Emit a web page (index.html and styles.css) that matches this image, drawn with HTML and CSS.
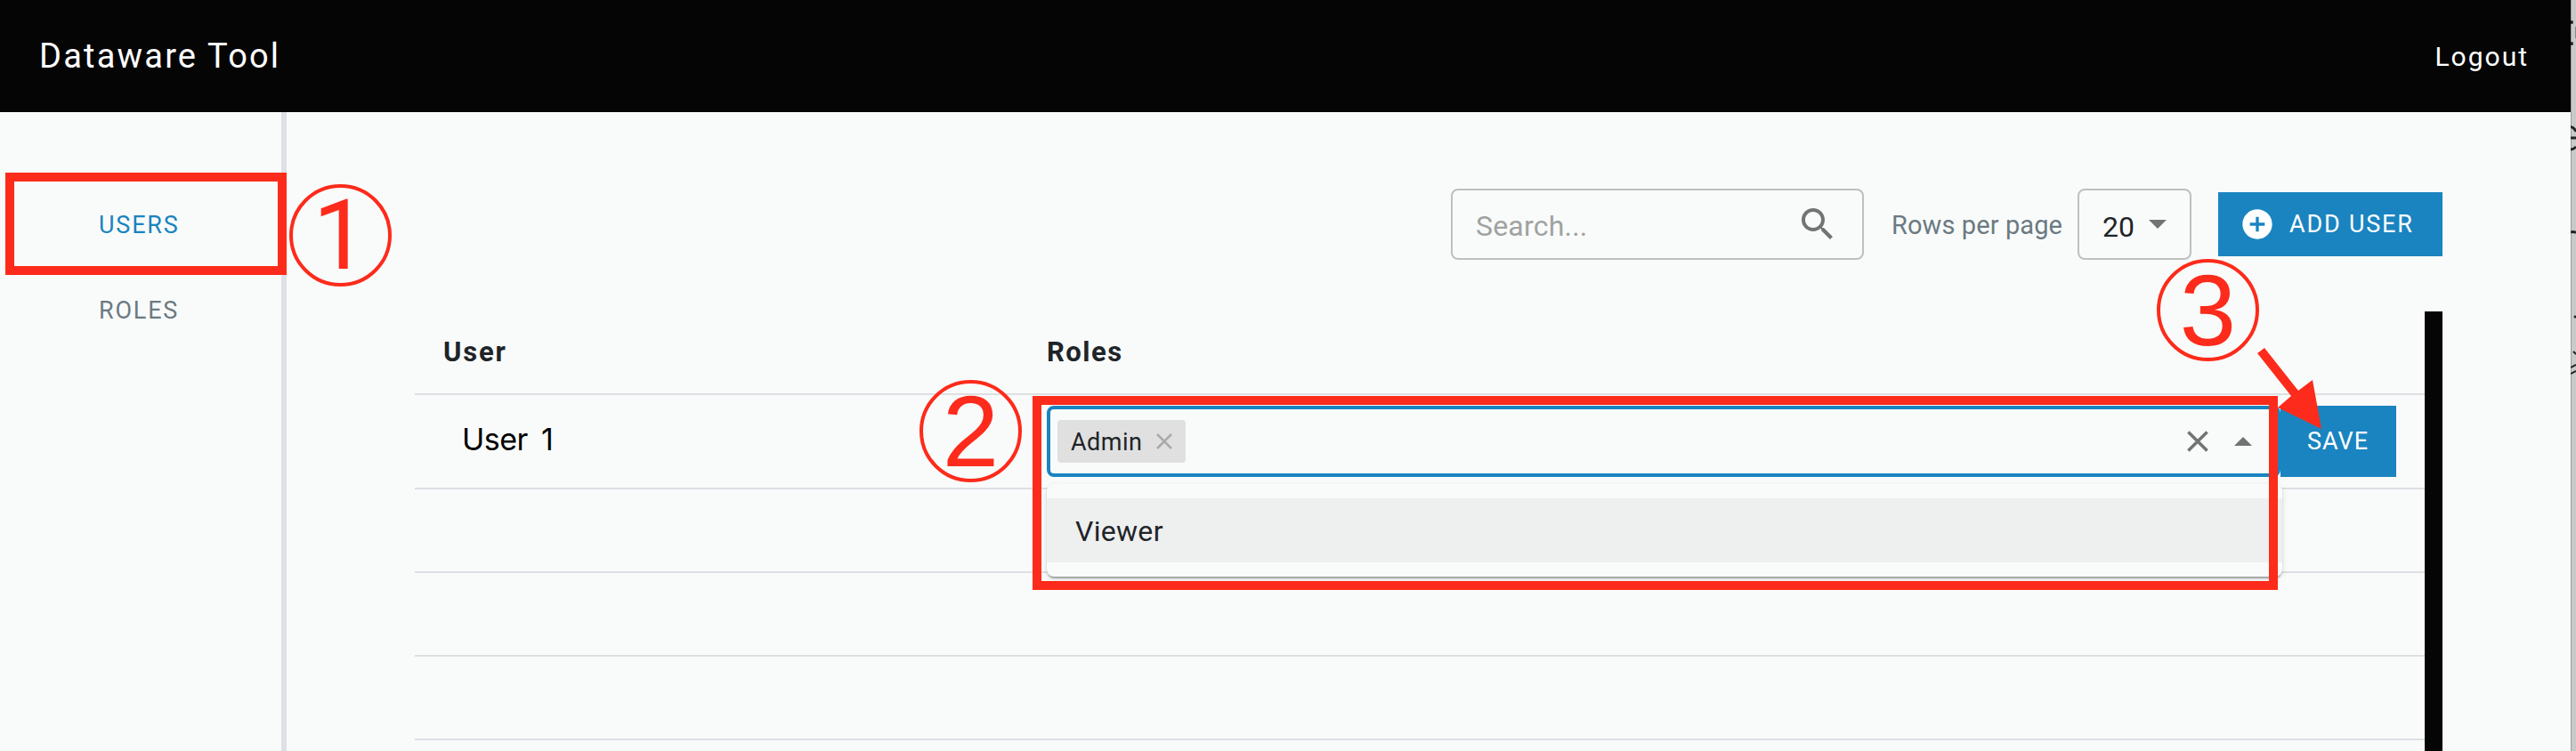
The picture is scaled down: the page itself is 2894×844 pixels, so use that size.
FILE: index.html
```html
<!DOCTYPE html>
<html lang="en">
<head>
<meta charset="utf-8">
<title>Dataware Tool</title>
<link rel="stylesheet" href="styles.css">
</head>
<body>
<div class="screen">
  <div class="app">
    <header class="topbar"><span class="brand">Dataware Tool</span><span class="logout">Logout</span></header>
    <div class="body">
      <nav class="sidebar">
        <a class="nav-item active"><span class="nav-users">USERS</span></a>
        <a class="nav-item"><span class="nav-roles">ROLES</span></a>
      </nav>
      <main class="main">
        <div class="toolbar">
          <div class="search"><span class="search-text">Search...</span>
            <svg class="search-icon" viewBox="0 0 24 24"><path d="M15.5 14h-.79l-.28-.27C15.41 12.59 16 11.11 16 9.5 16 5.91 13.09 3 9.5 3S3 5.91 3 9.5 5.91 16 9.5 16c1.61 0 3.09-.59 4.23-1.57l.27.28v.79l5 4.99L20.49 19l-4.99-5zm-6 0C7.01 14 5 11.99 5 9.5S7.01 5 9.5 5 14 7.01 14 9.5 11.99 14 9.5 14z"/></svg>
          </div>
          <span class="rows-label">Rows per page</span>
          <div class="rows-select"><span>20</span><svg class="caret" viewBox="0 0 20 10"><path d="M0 0h20L10 10z"/></svg></div>
          <div class="btn add"><svg class="add-icon" viewBox="0 0 24 24"><path d="M12 2C6.48 2 2 6.48 2 12s4.48 10 10 10 10-4.48 10-10S17.52 2 12 2zm5 11h-4v4h-2v-4H7v-2h4V7h2v4h4v2z"/></svg><span class="add-label">ADD USER</span></div>
        </div>
        <div class="table-wrap">
          <div class="table">
            <div class="row head"><div class="cell"><span class="th-user">User</span></div><div class="cell"><span class="th-roles">Roles</span></div></div>
            <div class="row first">
              <div class="cell name">User 1</div>
              <div class="cell edit">
                <div class="combo">
                  <div class="chip"><span class="chip-label">Admin</span><svg class="chip-x" viewBox="0 0 18 18"><path d="M1 1l16 16M17 1L1 17"/></svg></div>
                  <svg class="clear" viewBox="0 0 24 24"><path d="M1.4 1.4l21.2 21.2M22.600 1.400L1.400 22.600"/></svg>
                  <svg class="caret" viewBox="0 0 20 10"><path d="M0 10h20L10 0z"/></svg>
                  <div class="menu"><div class="option">Viewer</div></div>
                </div>
                <div class="btn save"><span class="save-label">SAVE</span></div>
              </div>
            </div>
            <div class="row"></div><div class="row"></div><div class="row"></div><div class="row"></div>
          </div>
          <div class="gutter"></div>
        </div>
      </main>
    </div>
  </div>
  <svg class="behind" viewBox="0 0 6 844">
    <path d="M.5 0v844" stroke="#9c9c9c" stroke-width="1"/>
    <g fill="none" stroke="#222426" stroke-width="3">
      <path d="M0 155h6M0 142.500Q4 143 6 148M0 168Q3 168 6 165M0 261Q3 260 6 261.500"/>
      <path d="M0 413l6-3M0 420l6-3M3 395l3 3" stroke-width="2"/>
    </g>
    <circle cx="1" cy="25" r="2" fill="#222"/><circle cx="1" cy="49" r="2" fill="#222"/><circle cx="5" cy="356" r="1.500" fill="#222"/>
    <path d="M5.500 30v13" stroke="#888"/>
  </svg>

  <div class="frame frame-users"></div>
  <div class="frame frame-roles"></div>
  <div class="mark mark-1"><span>1</span></div>
  <div class="mark mark-2"><span>2</span></div>
  <div class="mark mark-3"><span>3</span></div>
  <svg class="pointer" viewBox="0 0 80 100"><path d="M14 1L52 49L68 37L78 92L29 68L44 55L6 7z"/></svg>
</div>
</body>
</html>
```
FILE: styles.css
```css
* { box-sizing: border-box; }
body { margin: 0; background: #f9fbfa; font-family: Roboto, "Liberation Sans", sans-serif; color: #202428; }
svg { display: block; flex: none; }
.screen { position: relative; display: flex; width: 2894px; height: 844px; overflow: hidden; white-space: nowrap; }
.app { width: 2888px; display: flex; flex-direction: column; }
.behind { width: 6px; height: 844px; background: #cac9ca; }
.topbar { height: 126px; flex: none; background: #050505; color: #fff; display: flex; justify-content: space-between; align-items: center; padding: 0 47px 0 44px; }
.brand { font-size: 38px; letter-spacing: 2.2px; }
.logout { font-size: 30px; letter-spacing: 2px; }
.body { flex: 1; display: flex; min-height: 0; }
.sidebar { width: 322px; border-right: 6px solid #dde0e5; padding-top: 79px; }
.nav-item { height: 96px; display: flex; align-items: center; padding-left: 111px; font-size: 27px; color: #6b7a82; }
.nav-item.active { color: #1a84c0; }
.nav-users, .nav-roles { letter-spacing: 1.8px; }
.main { flex: 1; padding: 86px 144px 0 144px; display: flex; flex-direction: column; min-width: 0; }
.toolbar { height: 80px; flex: none; display: flex; justify-content: flex-end; align-items: center; }
.search { width: 464px; height: 80px; border: 2px solid #bec0bf; border-radius: 8px; display: flex; align-items: center; justify-content: space-between; padding: 6px 26px 0 26px; font-size: 32px; color: #a0a2a1; }
.search-text { letter-spacing: 0.2px; margin-top: -2px; }
.search-icon { width: 48px; height: 48px; fill: #727473; margin-top: -6px; }
.rows-label { width: 209px; margin-left: 31px; padding-top: 2px; font-size: 29px; letter-spacing: 0.1px; color: #6b7a82; }
.rows-select { width: 128px; height: 80px; border: 2px solid #bec0bf; border-radius: 8px; display: flex; align-items: center; justify-content: space-between; padding: 0 26px; font-size: 32px; }
.rows-select span { padding-top: 5px; }
.caret { width: 20px; height: 10px; fill: #727473; }
.btn { background: #1a84c0; color: #fff; display: flex; align-items: center; font-size: 27px; }
.add { width: 252px; height: 72px; margin-left: 30px; padding-left: 24px; }
.add-icon { width: 40px; height: 40px; fill: #fff; margin-right: 16px; }
.add-label { letter-spacing: 1.8px; padding-bottom: 1px; }
.table-wrap { flex: 1; margin-top: 58px; display: flex; min-height: 0; overflow: hidden; }
.table { width: 2258px; }
.gutter { width: 20px; background: #050505; }
.row { height: 94px; display: grid; grid-template-columns: 710px 1fr; border-bottom: 2px solid #dddfe4; }
.row.first { height: 106px; }
.cell { display: flex; align-items: center; }
.head { font-size: 31px; font-weight: 700; }
.head .cell { padding-bottom: 2px; }
.head .cell:first-child { padding-left: 32px; }
.th-user { letter-spacing: 1.8px; }
.th-roles { letter-spacing: 1.5px; }
.name { padding-left: 53px; padding-bottom: 5px; font-family: Inter, sans-serif; font-size: 34px; font-weight: 400; color: #000; letter-spacing: -0.5px; word-spacing: 6px; }
.combo { position: relative; width: 1386px; height: 80px; border: 4px solid #1a84c0; border-radius: 8px; display: flex; align-items: center; padding: 0 28px 0 8px; }
.chip { width: 144px; height: 48px; background: #e0e0e0; border-radius: 4px; display: flex; align-items: center; justify-content: space-between; padding: 0 15px; font-size: 27px; margin-right: auto; }
.chip-label { letter-spacing: 0.5px; padding-top: 1px; }
.chip-x { width: 18px; height: 18px; stroke: #a9aaaa; stroke-width: 2.5; }
.clear { width: 24px; height: 24px; stroke: #727473; stroke-width: 3.5; margin-right: 29px; }
.menu { position: absolute; z-index: 1; left: -4px; top: 84px; width: 1388px; height: 104px; padding: 16px 0; background: #f9fbfa; border-radius: 8px; box-shadow: 0 4px 2px -2px rgba(0,0,0,.2), 0 2px 2px rgba(0,0,0,.14), 0 2px 6px rgba(0,0,0,.12); }
.option { height: 72px; background: #eeefef; display: flex; align-items: center; padding: 1px 32px 0; font-size: 32px; letter-spacing: 0.3px; }
.save { width: 130px; height: 80px; padding-left: 30px; }
.save-label { letter-spacing: 1px; padding-bottom: 1px; }
.frame { position: absolute; z-index: 2; border: 10px solid #fd2b1b; }
.frame-users { left: 6px; top: 194px; width: 316px; height: 115px; }
.frame-roles { left: 1160px; top: 445px; width: 1399px; height: 218px; }
.mark { position: absolute; z-index: 3; width: 115px; height: 115px; border: 4px solid #fd2b1b; border-radius: 50%; display: flex; align-items: center; justify-content: center; color: #fd2b1b; font: 114px/1 "Liberation Sans", sans-serif; }
.mark-1 { left: 325px; top: 207px; font-family: Roboto, sans-serif; font-size: 110px; }
.mark-2 { left: 1033px; top: 427px; }
.mark-3 { left: 2423px; top: 291px; }
.pointer { position: absolute; z-index: 3; left: 2530px; top: 390px; width: 80px; height: 100px; fill: #fd2b1b; }
```
